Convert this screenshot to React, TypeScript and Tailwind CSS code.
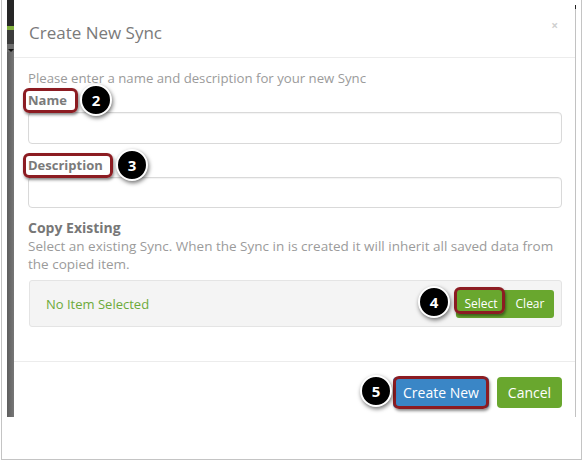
import React from "react";

function Badge({ n, x, y }: { n: number; x: number; y: number }) {
  return (
    <div
      className="absolute w-[32px] h-[32px] rounded-full bg-black border-2 border-white shadow-[1px_2px_4px_rgba(0,0,0,0.55)] flex items-center justify-center text-white text-[15px] font-bold"
      style={{ left: x - 16, top: y - 16 }}
    >
      {n}
    </div>
  );
}

function Outline({ x, y, w, h }: { x: number; y: number; w: number; h: number }) {
  return (
    <div
      className="absolute border-[3px] border-[#8c1c22] rounded-[6px] shadow-[1px_2px_3px_rgba(0,0,0,0.45)]"
      style={{ left: x, top: y, width: w, height: h }}
    />
  );
}

export default function App() {
  return (
    <div className="relative w-[583px] h-[462px] bg-white pl-[1px] font-['Open_Sans',sans-serif] overflow-hidden">
      <div className="w-[581px] h-[460px] border-l border-r border-b border-[#c4c4c4] flex flex-col">
        <div className="h-[417px] flex">
          <div className="w-[5px]" />
          {/* background strip */}
          <div className="w-[7px] flex flex-col bg-[#6e6e6e]">
            <div className="h-[26px] bg-[#262626]" />
            <div className="h-[4px] bg-[#7fae3c]" />
            <div className="h-[14px] bg-[#3c3c3c]" />
            <div className="h-[8px] flex items-end justify-center">
              <div className="w-0 h-0 border-l-[3px] border-r-[3px] border-t-[3px] border-l-transparent border-r-transparent border-t-[#111]" />
            </div>
            <div className="flex-1 bg-gradient-to-r from-[#5e5e5e] to-[#777]" />
          </div>
          {/* modal */}
          <div className="w-[561px] flex flex-col bg-white">
            <div className="h-[58px] border-b border-[#ececec] pl-[15px] pr-[13px] pt-[19px] flex justify-between">
              <div className="text-[17px] leading-[27px] text-[#7a7a7a]">Create New Sync</div>
              <div className="text-[12px] leading-[10px] font-bold text-[#d0d0d0] mt-[2px] mr-[4px]">×</div>
            </div>
            <div className="pl-[14px] pr-[13px] pt-[11px] h-[304px] border-b border-[#ececec] text-[13px] leading-[18px]">
              <div className="text-[#9b9b9b] text-[13.2px]">Please enter a name and description for your new Sync</div>
              <div className="mt-[4px] font-bold text-[#7a7a7a]">Name</div>
              <div className="mt-[3px] h-[32px] border border-[#d9d9d9] rounded-[4px] shadow-[inset_0_1px_1px_rgba(0,0,0,0.05)]" />
              <div className="mt-[12px] font-bold text-[#7a7a7a]">Description</div>
              <div className="mt-[3px] h-[31px] border border-[#d9d9d9] rounded-[4px] shadow-[inset_0_1px_1px_rgba(0,0,0,0.05)]" />
              <div className="mt-[11px] font-bold text-[14px] text-[#777]">Copy Existing</div>
              <div className="mt-[0px] text-[#9b9b9b] text-[13.5px] pr-[4px]">
                Select an existing Sync. When the Sync in is created it will inherit all saved data from the copied item.
              </div>
              <div className="mt-[7px] ml-[1px] h-[47px] bg-[#f4f4f4] border border-[#e4e4e4] rounded-[3px] flex items-center justify-between pl-[16px] pr-[7px]">
                <div className="text-[#6caa3a] text-[13px]">No Item Selected</div>
                <div className="flex h-[28px] rounded-[3px] overflow-hidden">
                  <div className="w-[50px] bg-[#69a72e] text-white text-[12px] flex items-center justify-center">Select</div>
                  <div className="w-[48px] bg-[#69a72e] text-white text-[12px] flex items-center justify-center">Clear</div>
                </div>
              </div>
            </div>
            <div className="flex-1 pr-[13px] pt-[15px] flex justify-end gap-[8px]">
              <div className="w-[96px] h-[31px] rounded-[4px] bg-[#3a86c6] text-white text-[14px] flex items-center justify-center">Create New</div>
              <div className="w-[65px] h-[31px] rounded-[4px] bg-[#69a72e] text-white text-[14px] flex items-center justify-center">Cancel</div>
            </div>
          </div>
          <div className="w-px flex flex-col bg-[#c2c2c2] mt-[5px]">
            <div className="h-[4px] bg-[#222]" />
          </div>
          <div className="flex-1" />
        </div>
      </div>

      <Outline x={23} y={88} w={55} h={25} />
      <Badge n={2} x={96} y={100} />
      <Outline x={23} y={153} w={90} h={25} />
      <Badge n={3} x={132} y={165} />
      <Outline x={454} y={287} w={51} h={27} />
      <Badge n={4} x={434} y={302} />
      <Outline x={393} y={376} w={96} h={33} />
      <Badge n={5} x={376} y={391} />
    </div>
  );
}
